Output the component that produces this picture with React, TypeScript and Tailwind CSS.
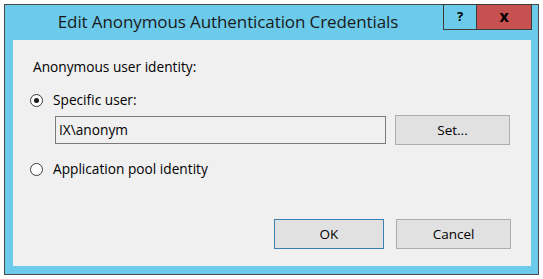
import React from 'react';

const FONT = { fontFamily: '"Open Sans", "Noto Sans", Arial, sans-serif' };

function Radio({ checked }: { checked?: boolean }) {
  return (
    <span className="flex h-[13px] w-[13px] shrink-0 items-center justify-center rounded-full border border-[#3c3c3c] bg-white">
      {checked && <span className="h-[5px] w-[5px] rounded-full bg-[#1a1a1a]" />}
    </span>
  );
}

function Btn({ label, focused, w = 'w-[115px]' }: { label: string; focused?: boolean; w?: string }) {
  return (
    <button
      type="button"
      className={`${w} h-[30px] border bg-[#e1e1e1] text-[13.5px] text-[#000] ${focused ? 'border-[#3c7fb1]' : 'border-[#adadad]'}`}
    >
      {label}
    </button>
  );
}

export default function App() {
  return (
    <div className="h-[279px] w-[543px] bg-white pl-[4px] pt-[4px]" style={FONT}>
      <div className="flex h-[271px] w-[535px] flex-col border border-[#4b4b4b] bg-[#6ccbea]">
        {/* title bar */}
        <div className="flex h-[35px] shrink-0">
          <div className="flex flex-1 items-center justify-center pl-[8px] pb-[1px] text-[17px] tracking-[-0.1px] text-[#1a1a1a]">
            Edit Anonymous Authentication Credentials
          </div>
          <div className="-mt-[1px] flex h-[26px] self-start pr-[6px]">
            <div className="flex w-[34px] items-center justify-center border border-[#3c3c3c] bg-[#6ccbea] text-[13px] font-bold text-black">
              ?
            </div>
            <div className="-ml-[1px] flex w-[56px] items-center justify-center border border-[#3c3c3c] bg-[#c75050] pb-[2px] text-[16px] font-bold text-black">
              x
            </div>
          </div>
        </div>

        {/* client area */}
        <div className="mb-[8px] ml-[8px] mr-[7px] flex flex-1 flex-col bg-[#f0f0f0] px-[20px] text-[13.7px] text-black">
          <div className="mt-[18px] leading-[18px]">Anonymous user identity:</div>

          <div className="mt-[15px] -ml-[3px] flex items-center gap-[10px] leading-[18px]">
            <Radio checked />
            <span>Specific user:</span>
          </div>

          <div className="mt-[6px] flex items-center gap-[9px] pl-[22px]">
            <div className="flex h-[28px] w-[331px] items-center border border-[#7a7a7a] bg-[#f0f0f0] pl-[3px]">
              IX\anonym
            </div>
            <Btn label="Set..." />
          </div>

          <div className="mt-[15px] -ml-[3px] flex items-center gap-[10px] leading-[18px]">
            <Radio />
            <span>Application pool identity</span>
          </div>

          <div className="mt-auto mb-[17px] flex justify-end gap-[12px]">
            <Btn label="OK" focused w="w-[110px]" />
            <Btn label="Cancel" />
          </div>
        </div>
      </div>
    </div>
  );
}
